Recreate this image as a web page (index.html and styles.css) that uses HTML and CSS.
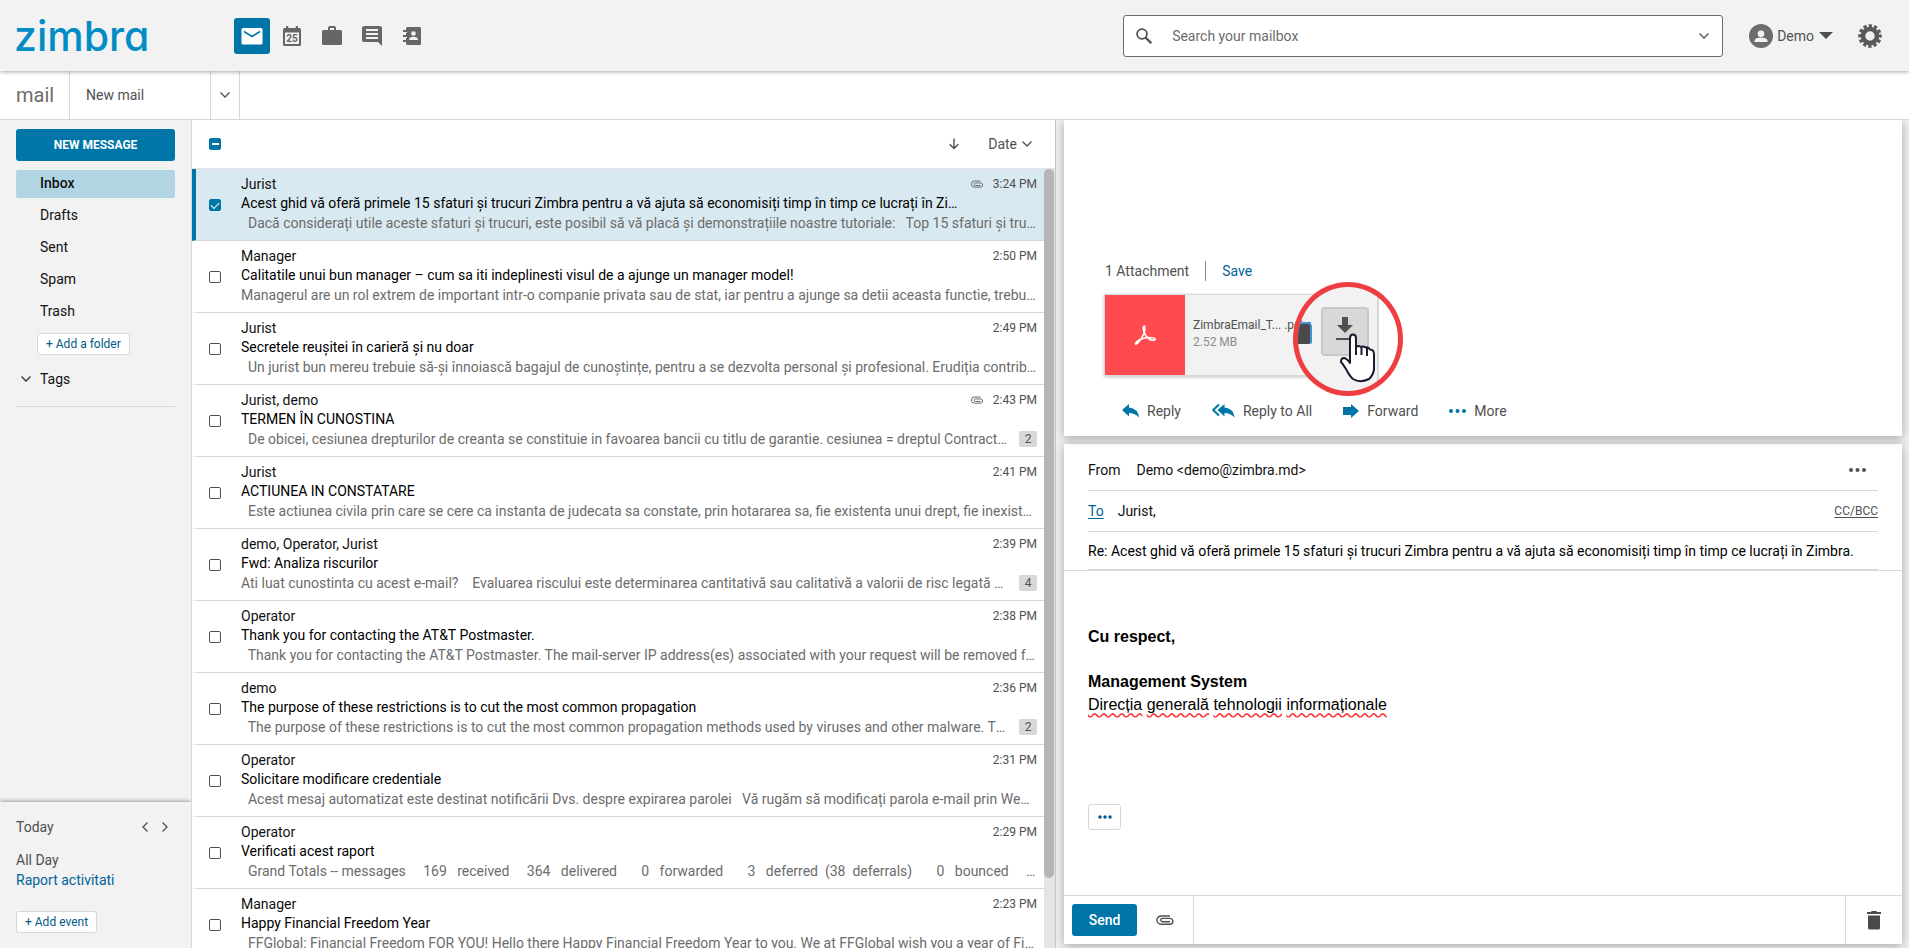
FILE: index.html
```html
<!DOCTYPE html>
<html lang="en">
<head>
<meta charset="utf-8">
<title>Zimbra Mail</title>
<link rel="stylesheet" href="styles.css">
</head>
<body>
<header class="topbar">
  <a class="logo" href="#">zimbra</a>
  <nav class="apps">
    <button class="app active" aria-label="Mail"><svg width="22" height="18" viewBox="0 0 22 18"><rect x="0.500" y="1" width="21" height="16.500" rx="1.500" fill="#fff"/><path d="M3 4.500l8 5 8-5" fill="none" stroke="#0075a8" stroke-width="1.500"/></svg></button>
    <button class="app" aria-label="Calendar"><svg width="18" height="20" viewBox="0 0 18 20"><path d="M3 0h2.200v2h7.600V0H15v2h1.500Q18 2 18 3.500v15q0 1.500-1.500 1.500h-15Q0 20 0 18.500v-15Q0 2 1.500 2H3zM2 6.500V18h14V6.500z" fill="#666" fill-rule="evenodd"/><text x="9" y="16" text-anchor="middle" class="cal-day">25</text></svg></button>
    <button class="app" aria-label="Briefcase"><svg width="20" height="20" viewBox="0 0 20 20"><path d="M6 4V2q0-2 2-2h4q2 0 2 2v2h4.500Q20 4 20 5.500v12q0 1.500-1.500 1.500h-17Q0 19 0 17.500v-12Q0 4 1.500 4zm2 0h4V2H8z" fill="#666" fill-rule="evenodd"/></svg></button>
    <button class="app" aria-label="Chat"><svg width="20" height="20" viewBox="0 0 20 20"><path d="M2 0h16q2 0 2 2v18l-4-4H2q-2 0-2-2V2q0-2 2-2zm2 3v2h12V3zm0 4v2h12V7zm0 4v2h12v-2z" fill="#666" fill-rule="evenodd"/></svg></button>
    <button class="app" aria-label="Contacts"><svg width="18" height="20" viewBox="0 0 18 20"><rect x="3" y="1" width="15" height="18" rx="1.500" fill="#666"/><path d="M0 5h5M0 10h5M0 15h5" stroke="#666" stroke-width="2"/><path d="M2.500 6.500h1.500M2.500 11.500h1.500" stroke="#f2f2f2"/><circle cx="10.500" cy="7.500" r="2.300" fill="#f2f2f2"/><path d="M6 14q0-3.200 4.500-3.200T15 14z" fill="#f2f2f2"/></svg></button>
  </nav>
  <form class="search">
    <svg width="16" height="16" viewBox="0 0 16 16"><circle cx="6" cy="6" r="4.900" fill="none" stroke="#505050" stroke-width="1.800"/><path d="M9.500 9.500l5.700 5.700" stroke="#505050" stroke-width="2.300"/></svg>
    <input type="text" placeholder="Search your mailbox" aria-label="Search your mailbox">
    <button type="button" class="plain" aria-label="Search options"><svg width="10" height="6" viewBox="0 0 10 6"><path d="M0.500 0.500L5 5l4.500-4.500" fill="none" stroke="#505050" stroke-width="1.300"/></svg></button>
  </form>
  <button class="plain user"><svg width="24" height="24" viewBox="0 0 24 24"><circle cx="12" cy="12" r="12" fill="#6c6c6c"/><circle cx="12" cy="9.700" r="3.300" fill="#f2f2f2"/><path d="M5.500 18v-1q0-3.500 6.500-3.500t6.500 3.500v1z" fill="#f2f2f2"/></svg><span>Demo</span><svg width="14" height="7" viewBox="0 0 14 7"><path d="M0 0h14L7 7z" fill="#505050"/></svg></button>
  <button class="plain gear" aria-label="Settings"><svg width="24" height="24" viewBox="0 0 24 24"><circle cx="12" cy="12" r="7" fill="none" stroke="#5a5a5a" stroke-width="4.600"/><circle cx="12" cy="12" r="10.200" fill="none" stroke="#5a5a5a" stroke-width="3.200" stroke-dasharray="3.200 2.141" transform="rotate(-9 12 12)"/></svg></button>
</header>

<div class="tabs">
  <h1 class="tab-title">mail</h1>
  <button class="tab-item">New mail</button>
  <button class="tab-more" aria-label="More actions"><svg width="10" height="6" viewBox="0 0 10 6"><path d="M0.500 0.500L5 5l4.500-4.500" fill="none" stroke="#505050" stroke-width="1.300"/></svg></button>
</div>

<main class="workspace">
  <aside class="sidebar">
    <nav class="folders">
      <button class="new-message">NEW MESSAGE</button>
      <a class="folder current" href="#">Inbox</a>
      <a class="folder" href="#">Drafts</a>
      <a class="folder" href="#">Sent</a>
      <a class="folder" href="#">Spam</a>
      <a class="folder" href="#">Trash</a>
      <button class="outline add-folder">+ Add a folder</button>
      <button class="plain tags"><svg width="10" height="6" viewBox="0 0 10 6"><path d="M0.500 0.500L5 5l4.500-4.500" fill="none" stroke="#333" stroke-width="1.300"/></svg>Tags</button>
    </nav>
    <section class="agenda">
      <div class="agenda-head"><span>Today</span>
        <button class="plain" aria-label="Previous day"><svg width="6" height="10" viewBox="0 0 6 10"><path d="M5.500 0.500L1 5l4.500 4.500" fill="none" stroke="#505050" stroke-width="1.300"/></svg></button>
        <button class="plain" aria-label="Next day"><svg width="6" height="10" viewBox="0 0 6 10"><path d="M0.500 0.500L5 5 0.500 9.500" fill="none" stroke="#505050" stroke-width="1.300"/></svg></button>
      </div>
      <div class="agenda-day">All Day</div>
      <a class="agenda-event" href="#">Raport activitati</a>
      <button class="outline">+ Add event</button>
    </section>
  </aside>

  <section class="list">
    <div class="list-head">
      <input type="checkbox" class="check some" aria-label="Select all" checked>
      <button class="plain sort-dir" aria-label="Sort direction"><svg width="10" height="12" viewBox="0 0 10 12"><path d="M5 0.500v10M0.700 6.200L5 10.500l4.300-4.300" fill="none" stroke="#505050" stroke-width="1.400"/></svg></button>
      <button class="plain sort-by">Date<svg width="10" height="6" viewBox="0 0 10 6"><path d="M0.500 0.500L5 5l4.500-4.500" fill="none" stroke="#505050" stroke-width="1.300"/></svg></button>
    </div>
    <div class="list-body">
      <div class="rows">
        <article class="row selected"><input type="checkbox" class="check" aria-label="Select message" checked><div class="msg"><div class="line"><span class="from">Jurist</span><svg class="clip" width="12" height="8" viewBox="0 0 12 8"><path d="M9.500 5.500H4.300a1.300 1.300 0 0 1 0-2.600h5.200a2.100 2.100 0 0 1 0 4.300H3.500A3 3 0 0 1 3.500 1h6" fill="none" stroke="#6c6c6c"/></svg><time>3:24 PM</time></div><div class="subject">Acest ghid vă oferă primele 15 sfaturi și trucuri Zimbra pentru a vă ajuta să economisiți timp în timp ce lucrați în Zimbra.</div><div class="line"><span class="preview">  Dacă considerați utile aceste sfaturi și trucuri, este posibil să vă placă și demonstrațiile noastre tutoriale:   Top 15 sfaturi și trucuri</span></div></div></article>
        <article class="row"><input type="checkbox" class="check" aria-label="Select message"><div class="msg"><div class="line"><span class="from">Manager</span><time>2:50 PM</time></div><div class="subject">Calitatile unui bun manager – cum sa iti indeplinesti visul de a ajunge un manager model!</div><div class="line"><span class="preview">Managerul are un rol extrem de important intr-o companie privata sau de stat, iar pentru a ajunge sa detii aceasta functie, trebuie sa</span></div></div></article>
        <article class="row"><input type="checkbox" class="check" aria-label="Select message"><div class="msg"><div class="line"><span class="from">Jurist</span><time>2:49 PM</time></div><div class="subject">Secretele reușitei în carieră și nu doar</div><div class="line"><span class="preview">  Un jurist bun mereu trebuie să-și înnoiască bagajul de cunoștințe, pentru a se dezvolta personal și profesional. Erudiția contribuie la</span></div></div></article>
        <article class="row"><input type="checkbox" class="check" aria-label="Select message"><div class="msg"><div class="line"><span class="from">Jurist, demo</span><svg class="clip" width="12" height="8" viewBox="0 0 12 8"><path d="M9.500 5.500H4.300a1.300 1.300 0 0 1 0-2.600h5.200a2.100 2.100 0 0 1 0 4.300H3.500A3 3 0 0 1 3.500 1h6" fill="none" stroke="#6c6c6c"/></svg><time>2:43 PM</time></div><div class="subject">TERMEN ÎN CUNOSTINA</div><div class="line"><span class="preview">  De obicei, cesiunea drepturilor de creanta se constituie in favoarea bancii cu titlu de garantie. cesiunea = dreptul Contractul de</span><span class="count">2</span></div></div></article>
        <article class="row"><input type="checkbox" class="check" aria-label="Select message"><div class="msg"><div class="line"><span class="from">Jurist</span><time>2:41 PM</time></div><div class="subject">ACTIUNEA IN CONSTATARE</div><div class="line"><span class="preview">  Este actiunea civila prin care se cere ca instanta de judecata sa constate, prin hotararea sa, fie existenta unui drept, fie inexistenta</span></div></div></article>
        <article class="row"><input type="checkbox" class="check" aria-label="Select message"><div class="msg"><div class="line"><span class="from">demo, Operator, Jurist</span><time>2:39 PM</time></div><div class="subject">Fwd: Analiza riscurilor</div><div class="line"><span class="preview">Ati luat cunostinta cu acest e-mail?    Evaluarea riscului este determinarea cantitativă sau calitativă a valorii de risc legată de o situatie</span><span class="count">4</span></div></div></article>
        <article class="row"><input type="checkbox" class="check" aria-label="Select message"><div class="msg"><div class="line"><span class="from">Operator</span><time>2:38 PM</time></div><div class="subject">Thank you for contacting the AT&amp;T Postmaster.</div><div class="line"><span class="preview">  Thank you for contacting the AT&amp;T Postmaster. The mail-server IP address(es) associated with your request will be removed from</span></div></div></article>
        <article class="row"><input type="checkbox" class="check" aria-label="Select message"><div class="msg"><div class="line"><span class="from">demo</span><time>2:36 PM</time></div><div class="subject">The purpose of these restrictions is to cut the most common propagation</div><div class="line"><span class="preview">  The purpose of these restrictions is to cut the most common propagation methods used by viruses and other malware. They are</span><span class="count">2</span></div></div></article>
        <article class="row"><input type="checkbox" class="check" aria-label="Select message"><div class="msg"><div class="line"><span class="from">Operator</span><time>2:31 PM</time></div><div class="subject">Solicitare modificare credentiale</div><div class="line"><span class="preview">  Acest mesaj automatizat este destinat notificării Dvs. despre expirarea parolei   Vă rugăm să modificați parola e-mail prin WebMail</span></div></div></article>
        <article class="row"><input type="checkbox" class="check" aria-label="Select message"><div class="msg"><div class="line"><span class="from">Operator</span><time>2:29 PM</time></div><div class="subject">Verificati acest raport</div><div class="line"><span class="preview">  Grand Totals -- messages     169   received     364   delivered       0   forwarded       3   deferred  (38  deferrals)       0   bounced       0   rejected</span></div></div></article>
        <article class="row"><input type="checkbox" class="check" aria-label="Select message"><div class="msg"><div class="line"><span class="from">Manager</span><time>2:23 PM</time></div><div class="subject">Happy Financial Freedom Year</div><div class="line"><span class="preview">  FFGlobal: Financial Freedom FOR YOU! Hello there Happy Financial Freedom Year to you. We at FFGlobal wish you a year of Financial</span></div></div></article>
      </div>
      <div class="scroll"><div class="thumb"></div></div>
    </div>
  </section>

  <section class="reading">
    <article class="card message">
      <div class="attach-head"><span>1 Attachment</span><a href="#">Save</a></div>
      <div class="attachment">
        <div class="pdf"><svg width="24" height="24" viewBox="0 0 24 24"><path d="M11.500 3q-2 0-1 4.500Q12 13 16 16q3.500 2 5.500 1t-1-2Q14 13.500 7 16.500q-4 2.300-4.500 4t2 0Q9 16 11.500 9q1-5 0-6z" fill="none" stroke="#fff" stroke-width="1.500"/></svg></div>
        <div class="file"><span class="file-name">ZimbraEmail_T... .pdf</span><span class="file-size">2.52 MB</span></div>
        <div class="lens">
          <svg class="lens-bin" width="16" height="25" viewBox="0 0 16 25"><path d="M0 0h5v2h9v3H0z" fill="#4790cc"/><rect y="4" width="15" height="20" rx="2" fill="#4790cc"/><rect y="4" width="13" height="20" rx="2" fill="#4a4a4a"/></svg>
          <button class="download" aria-label="Download"><svg width="18" height="24" viewBox="0 0 18 24"><path d="M6 0h6v8h5l-8 8-8-8h5z" fill="#505050"/><path d="M0 22h18" stroke="#505050" stroke-width="2"/></svg></button>
          <svg class="pointer" width="39" height="51" viewBox="0 0 39 51"><path d="M12 29V5q0-3.500 3-3.500T18 5v9q2-2 5 0 1.500-1 5 .5 2-1 4 2 4 0 4 5v15q-1 6-5 9.500-9 4.500-16 0-3.500-3-7-10-3-5-5-7 0-4 3-4 3 .5 6 5zM18 13v9M23.500 14v8M29 15v8" fill="#fff" stroke="#1b1b30" stroke-width="2" stroke-linejoin="round"/></svg>
        </div>
      </div>
      <div class="actions">
        <button class="plain"><svg width="17" height="14" viewBox="0 0 17 14"><path d="M0 6l7-6v3.500q9 1 10 10-4-4.500-10-4.500v3.500z" fill="#0075a8"/></svg>Reply</button>
        <button class="plain"><svg width="23" height="14" viewBox="0 0 23 14"><path d="M5.500 6l7-6v3.500q9 1 10 10-4-4.500-10-4.500v3.500z" fill="#0075a8"/><path d="M7 0.500L1.200 6 7 11.500" fill="none" stroke="#0075a8" stroke-width="2"/></svg>Reply to All</button>
        <button class="plain"><svg width="16" height="14" viewBox="0 0 16 14"><path d="M0 3h8V0l8 7-8 7v-3H0z" fill="#0075a8"/></svg>Forward</button>
        <button class="plain"><svg width="17" height="4" viewBox="0 0 17 4"><path d="M2 2h.01M8.500 2h.01M15 2h.01" stroke="#0075a8" stroke-width="4" stroke-linecap="round"/></svg>More</button>
      </div>
    </article>

    <form class="card compose">
      <div class="fields">
        <div class="field from-field"><span>From</span><span>Demo &lt;demo@zimbra.md&gt;</span><button type="button" class="plain end dots" aria-label="More options"><svg width="17" height="4" viewBox="0 0 17 4"><path d="M2 2h.01M8.500 2h.01M15 2h.01" stroke="#505050" stroke-width="4" stroke-linecap="round"/></svg></button></div>
        <div class="field"><a href="#">To</a><span>Jurist,</span><a class="end cc" href="#">CC/BCC</a></div>
        <div class="field subject-field"><input type="text" aria-label="Subject" value="Re: Acest ghid vă oferă primele 15 sfaturi și trucuri Zimbra pentru a vă ajuta să economisiți timp în timp ce lucrați în Zimbra."></div>
      </div>
      <div class="editor">
        <p><b>Cu respect,</b></p>
        <p><b>Management System</b></p>
        <p><u>Direcția</u> <u>generală</u> <u>tehnologii</u> <u>informaționale</u></p>
        <button type="button" class="quoted" aria-label="Show quoted text"><svg width="14" height="4" viewBox="0 0 14 4"><path d="M2 2h.01M7 2h.01M12 2h.01" stroke="#005a95" stroke-width="3.500" stroke-linecap="round"/></svg></button>
      </div>
      <div class="compose-bar">
        <div class="send-group"><button type="button" class="send">Send</button><button type="button" class="plain" aria-label="Attach"><svg width="18" height="10" viewBox="0 0 18 10"><path d="M14 6.800H6.500a1.700 1.700 0 0 1 0-3.400H14a2.800 2.800 0 0 1 0 5.800H5A4.100 4.100 0 0 1 5 1h9" fill="none" stroke="#505050" stroke-width="1.400"/></svg></button></div>
        <button type="button" class="plain discard" aria-label="Delete draft"><svg width="14" height="19" viewBox="0 0 14 19"><path d="M0 1h4q0-1 1-1h4q1 0 1 1h4v2H0zM1 4.500h12V17q0 1.500-1.500 1.500h-9Q1 18.500 1 17z" fill="#4a4a4a"/></svg></button>
      </div>
    </form>
  </section>
</main>
</body>
</html>
```
FILE: styles.css
```css
* { box-sizing: border-box; }
body {
  margin: 0;
  height: 100vh;
  display: flex;
  flex-direction: column;
  overflow: hidden;
  font: 14px/20px Roboto, "Noto Sans", sans-serif;
  color: #111;
  background: #fff;
}
button, input { font: inherit; color: inherit; }
button { cursor: pointer; }
svg { display: block; flex: none; }
a { text-decoration: none; color: #00639a; }
.plain { border: 0; padding: 0; background: none; color: #505050; }

/* Top bar */
.topbar {
  position: relative;
  flex: none;
  height: 71px;
  display: flex;
  align-items: center;
  padding: 0 27px 0 14px;
  background: #f2f2f2;
  box-shadow: 0 1px 4px rgba(0, 0, 0, .35);
  z-index: 2;
}
.logo {
  width: 220px;
  font: 500 41px/48px Inter, sans-serif;
  font-feature-settings: "cv11";
  color: #008cc4;
}
.apps { display: flex; gap: 4px; }
.app {
  width: 36px;
  height: 36px;
  padding: 0;
  display: grid;
  place-items: center;
  border: 0;
  border-radius: 3px;
  background: none;
}
.app.active { background: #0075a8; }
.cal-day { font: 700 10px Roboto, sans-serif; fill: #666; }
.search {
  flex: 0 1 600px;
  height: 42px;
  margin-left: auto;
  display: flex;
  align-items: center;
  gap: 20px;
  padding: 0 13px 0 12px;
  border: 1px solid #6c6c6c;
  border-radius: 3px;
  background: #fff;
}
.search input { flex: 1; min-width: 0; padding: 0; border: 0; outline: 0; background: none; }
.search input::placeholder { color: #6c6c6c; opacity: 1; }
.user { margin-left: 26px; display: flex; align-items: center; gap: 4px; }
.user span { padding-right: 1px; }
.gear { margin-left: 25px; }

/* Tabs */
.tabs { flex: none; height: 49px; display: flex; border-bottom: 1px solid #d8d8d8; }
.tab-title { width: 70px; margin: 0; padding-left: 16px; font-size: 20px; font-weight: 400; line-height: 48px; color: #6c6c6c; border-right: 1px solid #d8d8d8; }
.tab-item { width: 141px; padding: 0 16px; border: 0; border-right: 1px solid #d8d8d8; background: none; color: #505050; text-align: left; }
.tab-more { width: 29px; padding: 0; display: grid; place-items: center; border: 0; border-right: 1px solid #d8d8d8; background: none; }

.workspace {
  flex: 1;
  min-height: 0;
  display: grid;
  grid-template-columns: 192px minmax(0, 864fr) minmax(0, 853fr);
  grid-template-rows: minmax(0, 1fr);
}

/* Sidebar */
.sidebar { display: flex; flex-direction: column; justify-content: space-between; border-right: 1px solid #d8d8d8; background: #f2f2f2; }
.folders { margin: 9px 16px 0; padding-bottom: 17px; display: flex; flex-direction: column; gap: 4px; border-bottom: 1px solid #d8d8d8; }
.new-message { height: 32px; margin-bottom: 5px; border: 0; border-radius: 3px; background: #0075a8; color: #fff; font-size: 12px; font-weight: 700; }
.folder { padding: 3px 24px 5px; border-radius: 2px; color: #111; }
.folder.current { background: #b2d5e4; font-weight: 500; }
.outline { align-self: flex-start; height: 22px; padding: 0 8px; border: 1px solid #d8d8d8; border-radius: 3px; background: #fff; color: #005a87; font-size: 12px; line-height: 18px; }
.add-folder { margin: 3px 0 10px 21px; }
.tags { display: flex; align-items: center; gap: 9px; padding-left: 5px; color: #111; }
.agenda { padding: 15px 16px; display: flex; flex-direction: column; color: #505050; box-shadow: 0 -1px 4px rgba(0, 0, 0, .35); clip-path: inset(-8px 0 0 0); }
.agenda-head { display: flex; align-items: center; gap: 14px; padding-right: 7px; }
.agenda-head span { margin-right: auto; }
.agenda-day { margin-top: 13px; }
.agenda-event { margin-bottom: 21px; }

/* Message list */
.list { display: flex; flex-direction: column; border-right: 1px solid #c8c8c8; }
.list-head { flex: none; height: 49px; display: flex; align-items: center; padding: 0 23px 0 17px; border-bottom: 1px solid #e4e4e4; }
.sort-dir { margin-left: auto; margin-right: 29px; }
.sort-by { display: flex; align-items: center; gap: 5px; }
.list-body { flex: 1; min-height: 0; display: flex; overflow: hidden; }
.rows { flex: 1; min-width: 0; }
.row { height: 72px; display: flex; align-items: center; gap: 20px; padding: 0 7px 0 13px; border-left: 4px solid transparent; border-bottom: 1px solid #d8d8d8; }
.row.selected { border-left-color: #0075a8; background: #d9e9f1; }
.check { appearance: none; flex: none; width: 12px; height: 12px; margin: 0; display: grid; place-items: center; border: 1px solid #505050; border-radius: 2px; background: #fff; }
.check:checked { border-color: #0075a8; background: #0075a8; }
.check:checked::after { content: ""; width: 7px; height: 4px; border: solid #fff; border-width: 0 0 1px 1px; transform: rotate(-45deg); }
.check.some:checked::after { width: 7px; height: 2px; border: 0; background: #fff; transform: none; }
.msg { flex: 1; min-width: 0; margin-bottom: 3px; }
.line { display: flex; align-items: center; height: 20px; }
.from { margin-right: auto; }
time { font-size: 12px; color: #505050; }
.clip { margin-right: 10px; }
.subject { line-height: 19px; padding-right: 76px; white-space: nowrap; overflow: hidden; text-overflow: ellipsis; color: #000; }
.preview { flex: 1; min-width: 0; white-space: pre; overflow: hidden; text-overflow: ellipsis; color: #6c6c6c; }
.count { width: 18px; height: 16px; margin-left: 12px; border-radius: 2px; background: #d8d8d8; font-size: 12px; line-height: 16px; text-align: center; color: #505050; }
.scroll { flex: none; width: 11px; padding-right: 1px; background: #e4e4e4; }
.thumb { height: 91%; border-radius: 5px; background: #b5b5b5; }

/* Reading pane */
.reading { display: flex; flex-direction: column; gap: 8px; padding: 0 7px 4px 8px; background: #f0f0f0; }
.card { background: #fff; box-shadow: 0 2px 10px rgba(0, 0, 0, .3); }
.message { flex: none; clip-path: inset(0 -12px -12px -12px); padding: 140px 40px 4px; }
.attach-head { display: flex; padding: 1px; color: #505050; line-height: 20px; }
.attach-head span { padding-right: 16px; margin-right: 16px; border-right: 1px solid #8c8c8c; height: 20px; }
.attachment { position: relative; width: 275px; margin: 12px 0 14px; display: flex; border: 1px solid #d8d8d8; background: #f2f2f2; box-shadow: 0 1px 3px rgba(0, 0, 0, .25); }
.pdf { width: 80px; height: 80px; display: grid; place-items: center; background: #ff4b4f; }
.file { padding: 22px 8px; display: flex; flex-direction: column; font-size: 12px; line-height: 17px; }
.file-name { color: #505050; }
.file-size { color: #8c8c8c; }
.lens { position: absolute; left: 188px; top: -13px; width: 110px; height: 114px; border: 5px solid #ef3e42; border-radius: 50%; overflow: hidden; background: linear-gradient(to right, #f2f2f2 79px, #d8d8d8 79px 81px, #fff 81px); }
.lens-bin { position: absolute; left: -1px; top: 33px; }
.download { position: absolute; left: 23px; top: 20px; width: 48px; height: 49px; padding: 0 0 5px; display: grid; place-items: center; border: 2px solid #c8c8c8; border-radius: 4px; background: #d8d8d8; }
.pointer { position: absolute; left: 40px; top: 46px; }
.actions { display: flex; gap: 31px; padding-left: 18px; line-height: 42px; }
.actions button { display: flex; align-items: center; gap: 8px; }

/* Compose */
.compose { flex: 1; min-height: 0; display: flex; flex-direction: column; }
.fields { padding: 6px 24px 0; border-bottom: 1px solid #d8d8d8; }
.field { height: 41px; display: flex; align-items: center; gap: 14px; border-bottom: 1px solid #d8d8d8; }
.from-field { gap: 16px; }
.field a { text-decoration: underline; text-underline-offset: 2px; }
.field .end { margin-left: auto; }
.dots { padding-right: 12px; }
.field .cc { font-size: 12px; color: #505050; }
.subject-field { height: 38px; }
.subject-field input { flex: 1; min-width: 0; padding: 0; border: 0; outline: 0; background: none; color: #000; }
.editor { flex: 1; min-height: 0; padding: 54px 24px 0; overflow: hidden; font: 16px/23px "Liberation Sans", Arial, sans-serif; color: #000; }
.editor p { margin: 0; }
.editor p:first-child { margin-bottom: 22px; }
.editor u { text-decoration: underline wavy #f33; text-decoration-skip-ink: none; text-underline-offset: 2px; }
.quoted { width: 33px; height: 26px; margin-top: 88px; padding: 0; display: grid; place-items: center; border: 1px solid #d8d8d8; border-radius: 3px; background: #fff; }
.compose-bar { flex: none; height: 49px; display: flex; justify-content: space-between; border-top: 1px solid #d8d8d8; }
.send-group { display: flex; align-items: center; gap: 19px; padding: 0 19px 0 8px; border-right: 1px solid #d8d8d8; }
.send { width: 65px; height: 32px; padding: 0; border: 0; border-radius: 3px; background: #0075a8; color: #fff; font-weight: 500; }
.discard { width: 57px; display: grid; place-items: center; border-left: 1px solid #d8d8d8; }
```
